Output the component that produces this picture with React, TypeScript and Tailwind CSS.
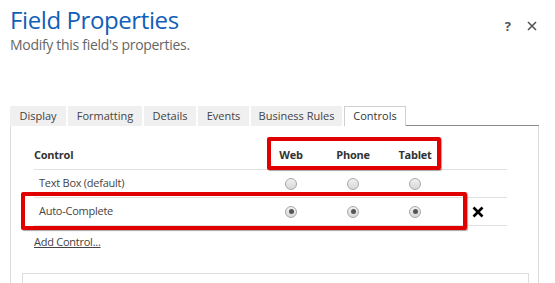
import React from 'react'

const tabs = [
  { label: 'Display', w: 'w-[56px]' },
  { label: 'Formatting', w: 'w-[74px]' },
  { label: 'Details', w: 'w-[52px]' },
  { label: 'Events', w: 'w-[51px]' },
  { label: 'Business Rules', w: 'w-[91px]' },
]

const rows = [
  { name: 'Text Box (default)', checked: false },
  { name: 'Auto-Complete', checked: true },
]

function Radio({ checked }: { checked: boolean }) {
  return (
    <span className="flex h-[12px] w-[12px] items-center justify-center rounded-full border border-[#a8a8a8] bg-gradient-to-b from-[#f0f0f0] to-[#d8d8d8]">
      {checked && <span className="h-[5px] w-[5px] rounded-full bg-[#555]" />}
    </span>
  )
}

export default function App() {
  return (
    <div className="relative h-[283px] w-[555px] overflow-hidden bg-white font-['Open_Sans',sans-serif]">
      {/* Header */}
      <div className="flex items-start justify-between pl-[10px] pr-[18px] pt-[5px]">
        <div>
          <h1 className="text-[24px] font-normal leading-[30px] tracking-[-0.4px] text-[#1160b7]">Field Properties</h1>
          <p className="text-[14px] leading-[20px] tracking-[-0.3px] text-[#666]">Modify this field's properties.</p>
        </div>
        <div className="mt-[14px] flex items-center gap-[16px] text-[#555]">
          <span className="text-[13px] font-bold leading-[14px]">?</span>
          <svg width="10" height="10" viewBox="0 0 10 10">
            <path d="M1 1L9 9M9 1L1 9" stroke="#555" strokeWidth="1.6" />
          </svg>
        </div>
      </div>

      {/* Tabs */}
      <div className="ml-[10px] mt-[51px] mr-[16px] flex h-[20px]">
        <div className="flex gap-[2px]">
          {tabs.map((t) => (
            <div
              key={t.label}
              className={`${t.w} flex h-[20px] items-center justify-center bg-[#f0f0f0] text-[11px] text-[#444]`}
            >
              {t.label}
            </div>
          ))}
          <div className="flex h-[20px] w-[62px] items-center justify-center border border-b-0 border-[#d0d0d0] bg-white text-[11px] text-[#333]">
            Controls
          </div>
        </div>
        <div className="flex-1 border-b border-[#8a8a8a]" />
      </div>

      {/* Panel */}
      <div className="ml-[10px] mr-[16px] h-[200px] border-x border-[#dcdcdc] pt-[15px]">
        <div className="ml-[23px] w-[473px] text-[11px] tracking-[-0.25px] text-[#444]">
          <div className="flex h-[29px] items-center border-b border-[#e0e0e0] font-bold text-[#333]">
            <div className="w-[226px]">Control</div>
            <div className="w-[62px] text-center">Web</div>
            <div className="w-[62px] text-center">Phone</div>
            <div className="w-[62px] text-center">Tablet</div>
          </div>
          {rows.map((r) => (
            <div key={r.name} className="flex h-[28px] items-center border-b border-[#e0e0e0]">
              <div className="w-[226px] pl-[5px]">{r.name}</div>
              {[0, 1, 2].map((i) => (
                <div key={i} className="flex w-[62px] justify-center">
                  <Radio checked={r.checked} />
                </div>
              ))}
              <div className="pl-[26px]">
                {r.checked && (
                  <svg width="12" height="12" viewBox="0 0 12 12">
                    <path d="M1.5 1.5L10.5 10.5M10.5 1.5L1.5 10.5" stroke="#000" strokeWidth="2.6" />
                  </svg>
                )}
              </div>
            </div>
          ))}
          <div className="mt-[8px] h-[16px] leading-[16px]">
            <span className="underline">Add Control...</span>
          </div>
        </div>
        <div className="ml-[11px] mt-[23px] h-[40px] w-[507px] border border-[#dcdcdc]" />
      </div>

      {/* Highlight annotations */}
      <div className="absolute left-[267px] top-[137px] h-[33px] w-[174px] rounded-[2px] border-[4px] border-[#e00000] shadow-[1px_1px_1px_rgba(0,0,0,0.35)]" />
      <div className="absolute left-[21px] top-[192px] h-[38px] w-[446px] rounded-[2px] border-[4px] border-[#e00000] shadow-[1px_1px_1px_rgba(0,0,0,0.35)]" />
    </div>
  )
}
